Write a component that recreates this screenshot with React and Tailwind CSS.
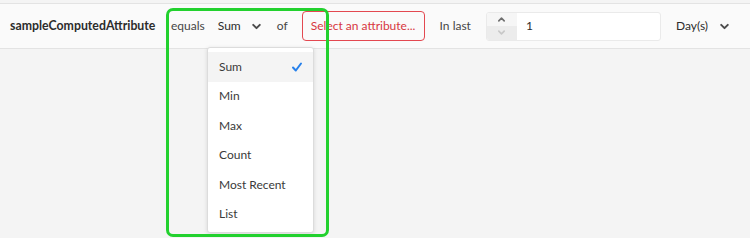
import React from 'react';

const font = { fontFamily: 'Lato, "Open Sans", sans-serif' };

function Chevron({ className = '' }) {
  return (
    <svg viewBox="0 0 10 10" className={className} fill="none" stroke="currentColor" strokeWidth="1.8" strokeLinecap="round" strokeLinejoin="round">
      <path d="M2 3.5 L5 6.5 L8 3.5" />
    </svg>
  );
}

const options = ['Sum', 'Min', 'Max', 'Count', 'Most Recent', 'List'];

export default function App() {
  return (
    <div className="relative w-[750px] h-[238px] bg-[#f4f4f4] overflow-hidden text-[12px] text-[#464646]" style={font}>
      <div className="mt-[3px] h-[46px] bg-[#fafafa] border-y border-[#e3e3e3] flex items-center">
        <span className="ml-[10px] w-[144px] font-bold text-[12.3px] text-[#2c2c2c]">sampleComputedAttribute</span>
        <span className="ml-[17px]">equals</span>
        <span className="ml-[13px] text-[#2c2c2c]">Sum</span>
        <Chevron className="ml-[10px] w-[11px] h-[11px] text-[#4b4b4b]" />
        <span className="ml-[15px]">of</span>
        <div className="ml-[14px] h-[30px] w-[123px] border border-[#e34850] rounded-[4px] flex items-center justify-center text-[#d7373f] bg-[#fafafa]">
          Select an attribute...
        </div>
        <span className="ml-[15px]">In last</span>
        <div className="ml-[15px] h-[29px] w-[175px] flex rounded-[3px] border border-[#eaeaea] overflow-hidden bg-white">
          <div className="w-[30px] flex flex-col">
            <div className="flex-1 bg-[#f6f6f6] flex items-center justify-center text-[#6e6e6e]">
              <Chevron className="w-[9px] h-[9px] rotate-180" />
            </div>
            <div className="flex-1 bg-[#ececec] flex items-center justify-center text-[#c8c8c8]">
              <Chevron className="w-[9px] h-[9px]" />
            </div>
          </div>
          <div className="flex-1 flex items-center pl-[9px] text-[#2c2c2c]">1</div>
        </div>
        <span className="ml-[15px] text-[#2c2c2c]">Day(s)</span>
        <Chevron className="ml-[11px] w-[11px] h-[11px] text-[#4b4b4b]" />
      </div>

      <div className="absolute left-[207px] top-[47px] w-[107px] h-[186px] bg-white border border-[#dcdcdc] rounded-[3px] shadow-[0_1px_4px_rgba(0,0,0,0.12)] pt-[4px]">
        {options.map((o, i) => (
          <div key={o} className={`h-[29.5px] flex items-center justify-between pl-[11px] pr-[10px] text-[#3a3a3a] ${i === 0 ? 'bg-[#f4f4f4]' : ''}`}>
            <span>{o}</span>
            {i === 0 && (
              <svg viewBox="0 0 12 12" className="w-[12px] h-[12px] text-[#2680eb]" fill="none" stroke="currentColor" strokeWidth="2" strokeLinecap="round" strokeLinejoin="round">
                <path d="M2 6.5 L4.8 9.5 L10 2.5" />
              </svg>
            )}
          </div>
        ))}
      </div>

      <div className="absolute left-[166px] top-[8px] w-[163px] h-[229px] border-[3px] border-[#22d12e] rounded-[7px] pointer-events-none" />
    </div>
  );
}
